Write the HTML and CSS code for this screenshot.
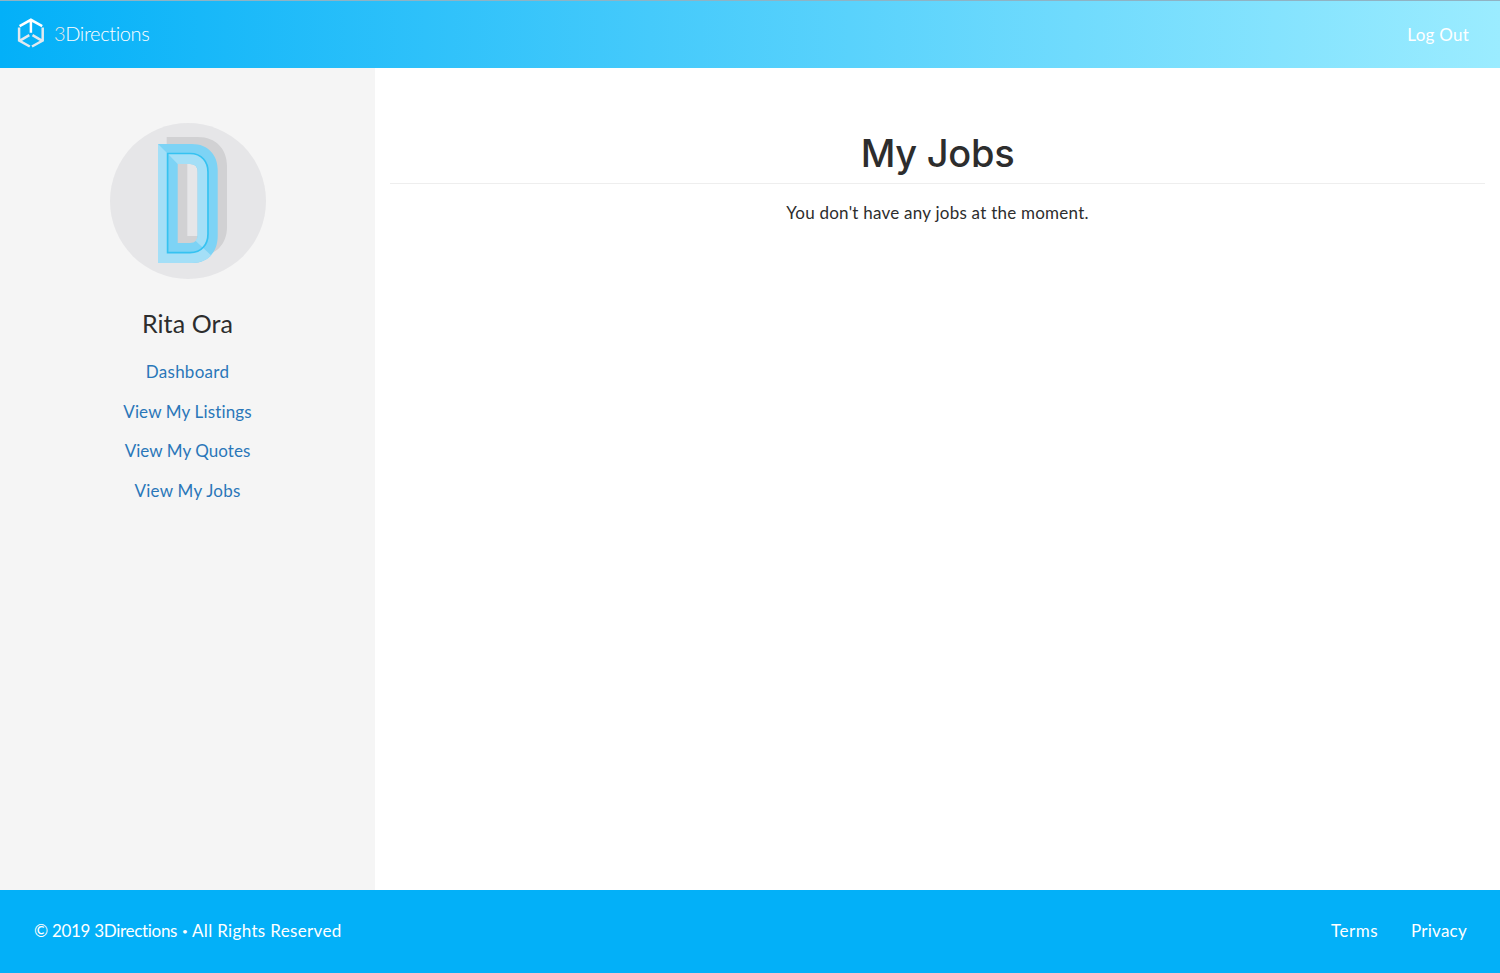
FILE: index.html
```html
<!DOCTYPE html>
<html lang="en">
<head>
<meta charset="utf-8">
<title>3Directions</title>
<link rel="stylesheet" href="styles.css">
</head>
<body>
<header class="navbar">
  <a class="brand">
    <svg class="brand-mark" width="28" height="32" viewBox="0 0 28 32" fill="none" stroke="#e2e9ef" stroke-width="2.5">
      <path d="M2.6 9.2 13.9 2.8 25.2 9.2M13.9 3.6V15.8" stroke="#fff"/>
      <path d="M2.1 10.5V23.5L12.8 29.5M25.7 10.5V23.5L15 29.5M12.3 18.2 3 23.6M15.5 18.2 24.8 23.6"/>
    </svg>
    <span class="brand-name"><span class="brand-digit">3</span>Directions</span>
  </a>
  <a class="logout">Log Out</a>
</header>
<div class="page">
  <aside class="sidebar">
    <svg class="avatar" width="156" height="156" viewBox="0 0 156 156">
      <circle cx="78" cy="78" r="78" fill="#e6e6e8"/>
      <path fill="#d1d1d3" fill-rule="evenodd" d="M56.7 14H88C106 14 117 26 117 43V104C117 121 106 133 88 133H56.7ZM77.3 34V113H87.7V34Z"/>
      <path fill="#7dd3f5" fill-rule="evenodd" d="M48 21H82C98 21 107.7 32 107.7 47V113C107.7 129 98 140 82 140H48ZM67.7 41V120H80Q87.7 120 87.7 112V49Q87.7 41 80 41Z"/>
      <path fill="#a4dff7" d="M48 21 57.3 30.3V129.3H82Q89 129.3 93.2 125L101.3 132.5Q94 140 82 140H48Z"/>
      <path fill="#a4dff7" d="M57.3 30.3H80C92 30.3 98.3 39 98.3 49V111Q98.3 120 93.2 125L85.5 117.8Q87.7 115.8 87.7 112V49Q87.7 41 80 41H67.7Z"/>
      <path fill="none" stroke="#35c2f1" stroke-width="1.7" d="M57.6 30.5H80C92 30.5 98 39 98 49V111C98 121 92 129.6 80 129.6H57.6Z"/>
    </svg>
    <h2 class="user-name">Rita Ora</h2>
    <nav class="side-nav">
      <a class="nav-wide">Dashboard</a>
      <a class="nav-mid">View My Listings</a>
      <a class="nav-tight">View My Quotes</a>
      <a class="nav-wide">View My Jobs</a>
    </nav>
  </aside>
  <main class="content">
    <h1 class="title">My Jobs</h1>
    <p class="empty">You don't have any jobs at the moment.</p>
  </main>
</div>
<footer class="footer">
  <p class="copyright"><span class="copy-owner">© 2019 3Directions</span><span class="dot">•</span><span class="copy-rights">All Rights Reserved</span></p>
  <nav class="footer-links"><a class="terms">Terms</a><a class="privacy">Privacy</a></nav>
</footer>
</body>
</html>
```
FILE: styles.css
```css
* { box-sizing: border-box; }
body {
  margin: 0;
  height: 973px;
  display: flex;
  flex-direction: column;
  font-family: Lato, "Open Sans", sans-serif;
  font-size: 17px;
  line-height: 24px;
  font-variant-ligatures: none;
  color: #2d2d2d;
  background: #fff;
}
.navbar {
  height: 68px;
  flex: none;
  display: flex;
  align-items: center;
  justify-content: space-between;
  padding: 0 31px 0 17px;
  border-top: 1px solid #8fb3c4;
  background: linear-gradient(90deg, #03b0f8, #9becff);
  color: #fff;
}
.brand { display: flex; align-items: center; gap: 9px; padding-bottom: 3px; }
.brand-mark { display: block; }
.brand-name { font-size: 20px; font-weight: 300; letter-spacing: -0.36px; }
.brand-digit { color: #e6e6e6; }
.logout { letter-spacing: 0.25px; }
.page { flex: 1; display: flex; }
.sidebar {
  width: 375px;
  padding-top: 55px;
  display: flex;
  flex-direction: column;
  align-items: center;
  background: #f5f5f5;
}
.avatar { display: block; }
.user-name { margin: 29px 0 0; font-size: 25px; line-height: 30px; font-weight: 400; letter-spacing: 0.1px; }
.side-nav { display: flex; flex-direction: column; align-items: center; gap: 15.7px; margin-top: 22px; color: #2a77b9; }
.nav-wide { letter-spacing: 0.26px; }
.nav-mid { letter-spacing: 0.15px; }
.nav-tight { letter-spacing: 0.05px; }
.content { flex: 1; padding: 60px 15px 0; text-align: center; }
.title {
  margin: 0;
  height: 56px;
  border-bottom: 1px solid #eee;
  font-family: Inter, sans-serif;
  font-size: 38px;
  line-height: 50px;
  font-weight: 500;
  letter-spacing: -0.3px;
}
.empty { margin: 17px 0 0; letter-spacing: 0.24px; }
.footer {
  height: 83px;
  flex: none;
  display: flex;
  align-items: center;
  justify-content: space-between;
  padding: 0 33px 2px 34px;
  background: #03b0f8;
  color: #fff;
}
.copyright { display: flex; align-items: center; margin: 0; }
.copy-owner { width: 148px; letter-spacing: -0.3px; white-space: nowrap; }
.dot { width: 10px; font-size: 10px; }
.copy-rights { letter-spacing: 0.34px; }
.footer-links { display: flex; gap: 33px; }
.terms { letter-spacing: 0.5px; }
.privacy { letter-spacing: 0.25px; }
```
